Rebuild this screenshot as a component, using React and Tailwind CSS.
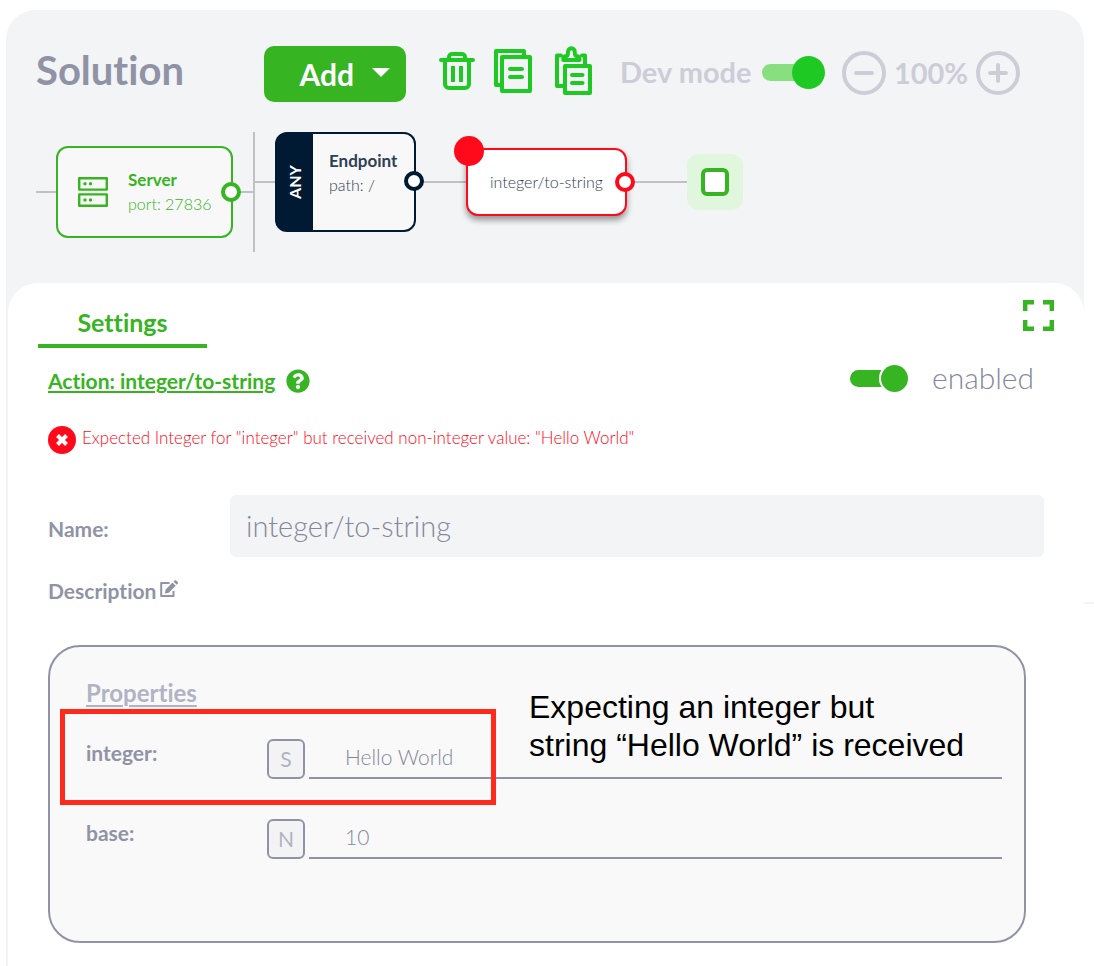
import React from "react";

function TrashIcon() {
  return (
    <svg width="36" height="38" viewBox="0 0 36 38" fill="none" stroke="currentColor" strokeWidth="4" strokeLinecap="round" strokeLinejoin="round" aria-hidden="true">
      <path d="M2 8h32" />
      <path d="M10 8V5a3 3 0 0 1 3-3h10a3 3 0 0 1 3 3v3" />
      <path d="M6 8v24a4 4 0 0 0 4 4h16a4 4 0 0 0 4-4V8" />
      <path d="M14 14v16M22 14v16" strokeLinecap="butt" />
    </svg>
  );
}

function CopyIcon() {
  return (
    <svg width="38" height="44" viewBox="0 0 38 44" fill="none" stroke="currentColor" strokeWidth="4" strokeLinecap="round" strokeLinejoin="round" aria-hidden="true">
      <path d="M6 36H2V2h28v5" />
      <rect x="8" y="8" width="28" height="34" />
      <path d="M16 20h12M16 28h12" />
    </svg>
  );
}

function PasteIcon() {
  return (
    <svg width="38" height="50" viewBox="0 0 38 50" fill="none" stroke="currentColor" strokeWidth="4" strokeLinecap="round" strokeLinejoin="round" aria-hidden="true">
      <path d="M8 40H2V9.500h4M27 9.500h3V18" />
      <path d="M8.300 14v-1a3 3 0 0 1 3-3c1.500 0 1.700-1 1.700-4a3.400 3.800 0 0 1 6.800 0c0 3 .2 4 1.700 4a3 3 0 0 1 3 3v1z" />
      <rect x="10" y="20" width="25" height="27" />
      <path d="M17 29h10.500M17 37h10.500" />
    </svg>
  );
}

function ServerIcon() {
  return (
    <svg width="30" height="30" viewBox="0 0 30 30" fill="none" stroke="currentColor" strokeWidth="2.4" strokeLinejoin="round" aria-hidden="true">
      <rect x="1.2" y="1.2" width="27.6" height="11.4" />
      <rect x="1.2" y="17.4" width="27.6" height="11.4" />
      <g fill="currentColor" stroke="none">
        <circle cx="7" cy="6.8" r="1.7" />
        <circle cx="12.5" cy="6.8" r="1.7" />
        <circle cx="7" cy="23" r="1.7" />
        <circle cx="12.5" cy="23" r="1.7" />
      </g>
    </svg>
  );
}

function ExpandIcon() {
  return (
    <svg width="31" height="31" viewBox="0 0 31 31" fill="none" stroke="currentColor" strokeWidth="4.4" aria-hidden="true">
      <path d="M2.2 11V2.2H11M20 2.2h8.8V11M28.8 20v8.8H20M11 28.8H2.2V20" />
    </svg>
  );
}

function HelpIcon() {
  return (
    <svg width="24" height="24" viewBox="0 0 512 512" fill="currentColor" aria-hidden="true">
      <path d="M504 256c0 137-111 248-248 248S8 393 8 256 119 8 256 8s248 111 248 248zM262.700 90c-54.500 0-89.300 23-116.500 63.800-3.500 5.300-2.400 12.400 2.700 16.300l34.700 26.300c5.200 3.900 12.600 3 16.700-2.100 17.900-22.700 30.100-35.800 57.300-35.800 20.400 0 45.700 13.100 45.700 33 0 15-12.400 22.700-32.500 34C247.100 238.500 216 254.900 216 296v4c0 6.600 5.400 12 12 12h56c6.600 0 12-5.400 12-12v-1.300c0-28.500 83.200-29.600 83.200-106.700 0-58-60.200-102-116.500-102zM256 338c-25.400 0-46 20.600-46 46s20.600 46 46 46 46-20.600 46-46-20.600-46-46-46z" />
    </svg>
  );
}

function ErrorIcon() {
  return (
    <svg className="shrink-0" width="28" height="28" viewBox="0 0 28 28" aria-hidden="true">
      <circle cx="14" cy="14" r="14" fill="currentColor" />
      <path d="M9.500 9.500l9 9M18.500 9.500l-9 9" stroke="white" strokeWidth="4" />
    </svg>
  );
}

function EditIcon() {
  return (
    <svg width="18" height="18" viewBox="0 0 18 18" aria-hidden="true">
      <path d="M9.500 3H1.200v13h12.300v-5" fill="none" stroke="currentColor" strokeWidth="2" strokeLinejoin="round" />
      <path d="M12.500 2.600l3.200 3.200-6.900 6.900-4 .8.800-4zM13.500 1.600l1-1a1.200 1.200 0 0 1 1.700 0l1.400 1.400a1.200 1.200 0 0 1 0 1.700l-1 1z" fill="currentColor" />
    </svg>
  );
}

function ZoomIcon({ plus }) {
  return (
    <svg width="44" height="44" viewBox="0 0 44 44" fill="none" stroke="currentColor" strokeWidth="4" strokeLinecap="round" aria-hidden="true">
      <circle cx="22" cy="22" r="20" />
      <path d={plus ? "M14 22h16M22 14v16" : "M14 22h16"} />
    </svg>
  );
}

function Port({ className }) {
  return <span className={"absolute size-5 rounded-full border-4 bg-white " + className} />;
}

function Toolbar() {
  return (
    <div className="flex items-center pl-[30px]">
      <h1 className="w-[228px] pb-2 text-[40px] leading-[48px] font-bold text-[#9093a5]">Solution</h1>
      <button type="button" className="flex h-14 w-[142px] items-center justify-end gap-[18px] rounded-[10px] bg-[#36b422] pr-4 text-[30px] leading-9 font-bold text-white">
        Add
        <svg className="mb-1" width="18" height="9" viewBox="0 0 18 9" fill="currentColor" aria-hidden="true">
          <path d="M0 0h18L9 9z" />
        </svg>
      </button>
      <div className="ml-[33px] flex items-center gap-[19px] pb-1.5 text-[#1fc924]">
        <button type="button" aria-label="Delete"><TrashIcon /></button>
        <button type="button" aria-label="Copy"><CopyIcon /></button>
        <button type="button" aria-label="Paste" className="ml-1"><PasteIcon /></button>
      </div>
      <label className="ml-[27px] flex items-center pb-1 text-[29px] leading-9 font-bold text-[#cdcdd8]">
        <span className="w-[142px] whitespace-nowrap">Dev mode</span>
        <input
          type="checkbox"
          role="switch"
          defaultChecked
          className="relative h-[33px] w-[63px] appearance-none before:absolute before:top-2 before:left-0 before:h-[17px] before:w-[50px] before:rounded-full before:bg-[#87df80] after:absolute after:top-0 after:right-0 after:size-[33px] after:rounded-full after:bg-[#1fc924]"
        />
      </label>
      <div className="ml-[17px] flex items-center pb-0.5 text-[#cdcdd8]">
        <button type="button" aria-label="Zoom out"><ZoomIcon /></button>
        <span className="w-[90px] text-center text-[29px] leading-9 font-bold">100%</span>
        <button type="button" aria-label="Zoom in"><ZoomIcon plus /></button>
      </div>
    </div>
  );
}

function Flow() {
  return (
    <div className="relative h-[181px] text-[17px] leading-6">
      <span className="absolute top-[89px] left-[30px] h-0.5 w-[218px] bg-[#c1c1c1]" />
      <span className="absolute top-[79px] left-[249px] h-0.5 w-[432px] bg-[#c1c1c1]" />
      <span className="absolute top-[30px] left-[247px] h-[120px] w-0.5 bg-[#c1c1c1]" />

      <div className="absolute top-11 left-[50px] flex h-[92px] w-[177px] items-center gap-5 rounded-xl border-2 border-[#36b422] bg-[#f8f8f8] pl-5 text-[#36b422]">
        <ServerIcon />
        <div>
          <div className="font-bold">Server</div>
          <div className="text-base leading-6 font-light">port: 27836</div>
        </div>
        <Port className="top-[34px] -right-2.5 border-[#36b422]" />
      </div>

      <div className="absolute top-[30px] left-[269px] flex h-[100px] w-[141px] rounded-xl border-2 border-[#001a33] bg-[#001a33] text-[#2f4055]">
        <div className="flex w-9 items-center justify-center">
          <span className="-rotate-90 text-base font-bold text-white">ANY</span>
        </div>
        <div className="flex-1 rounded-r-[10px] bg-[#f8f8f8] pt-[15px] pl-4">
          <div className="font-bold">Endpoint</div>
          <div className="text-base leading-6 font-light">path: /</div>
        </div>
        <Port className="top-[37px] -right-2.5 border-[#001a33]" />
      </div>

      <div className="absolute top-[46px] left-[460px] flex h-[68px] w-[161px] items-center justify-center rounded-xl border-2 border-[#ff0a1a] bg-white text-base font-light text-[#2f4055] shadow-[0_4px_6px_rgba(0,0,0,0.4)]">
        integer/to-string
        <span className="absolute -top-3.5 -left-3.5 size-[30px] rounded-full bg-[#ff0a1a]" />
        <Port className="top-[22px] -right-2.5 border-[#ff0a1a]" />
      </div>

      <div className="absolute top-[52px] left-[681px] flex size-14 items-center justify-center rounded-xl bg-[#e0f6dd]">
        <span className="size-7 rounded-md border-4 border-[#36b422] bg-white" />
      </div>
    </div>
  );
}

function PropertyRow({ id, label, kind, value }) {
  return (
    <div className="flex h-10">
      <label htmlFor={id} className="w-[181px] text-[21px] leading-7 font-bold text-[#9093a5]">{label}</label>
      <button type="button" aria-label={label + " type"} className="w-[38px] rounded-md border-2 border-[#9093a5] bg-[#f3f3f6] text-[21px] leading-9 text-[#b0b3c3]">{kind}</button>
      <input id={id} defaultValue={value} className="ml-1 min-w-0 flex-1 border-b-2 border-[#9093a5] bg-transparent pb-0.5 pl-9 text-[21px] font-light text-[#85889b] outline-none" />
    </div>
  );
}

function Settings() {
  return (
    <main className="ml-0.5 flex-1 rounded-t-[30px] bg-white pb-6">
      <div className="flex items-start justify-between pt-[17px] pr-[30px] pl-[30px]">
        <button type="button" className="h-12 w-[169px] border-b-4 border-[#36b422] text-[25px] leading-8 font-bold text-[#36b422]">Settings</button>
        <button type="button" aria-label="Expand" className="text-[#36b422]"><ExpandIcon /></button>
      </div>

      <div className="pl-10">
        <div className="mt-3 flex h-9 items-center justify-between pr-[50px]">
          <div className="flex items-center gap-[11px] pt-1.5 text-[#36b422]">
            <a href="#action" className="text-[21px] leading-7 font-bold underline decoration-2 underline-offset-2">Action: integer/to-string</a>
            <a href="#help" aria-label="Help"><HelpIcon /></a>
          </div>
          <label className="flex items-center gap-6 text-[30px] leading-9 font-light text-[#85889b]">
            <input
              type="checkbox"
              role="switch"
              defaultChecked
              className="relative h-[27px] w-[58px] appearance-none before:absolute before:top-[5px] before:left-0 before:h-[17px] before:w-[44px] before:rounded-full before:bg-[#36b422] after:absolute after:top-0 after:right-0 after:size-[27px] after:rounded-full after:bg-[#36b422] after:ring-2 after:ring-white"
            />
            <span className="pb-0.5">enabled</span>
          </label>
        </div>

        <p role="alert" className="mt-[30px] flex h-7 items-center gap-1.5 text-[17px] leading-6 font-light text-[#ff0a1a]">
          <ErrorIcon />
          <span className="pb-1">Expected Integer for "integer" but received non-integer value: "Hello World"</span>
        </p>

        <div className="mt-[41px] flex items-center pr-10">
          <label htmlFor="name" className="w-[182px] pt-1.5 text-[21px] leading-7 font-bold text-[#9093a5]">Name:</label>
          <input id="name" defaultValue="integer/to-string" className="h-[62px] min-w-0 flex-1 rounded-md bg-[#f3f4f6] px-4 pb-0.5 text-[29px] font-light text-[#85889b] outline-none" />
        </div>

        <div className="mt-5 flex items-center gap-1 text-[#9093a5]">
          <span className="text-[21px] leading-7 font-bold">Description</span>
          <button type="button" aria-label="Edit description" className="pb-1"><EditIcon /></button>
        </div>

        <section className="relative mt-10 mr-[58px] h-[298px] rounded-[32px] border-2 border-[#9093a5] bg-[#f9f9f9] pt-[30px] pr-[22px] pl-9">
          <h2 className="text-2xl leading-8 font-bold text-[#b0b3c3] underline decoration-2 underline-offset-3">Properties</h2>
          <div className="mt-[30px] flex flex-col gap-10">
            <PropertyRow id="integer" label="integer:" kind="S" value="Hello World" />
            <PropertyRow id="base" label="base:" kind="N" value="10" />
          </div>
          <div className="pointer-events-none absolute top-[62px] left-2.5 h-24 w-[436px] border-5 border-[#ff2a1c]" />
          <p className="pointer-events-none absolute top-[41px] left-[479px] font-['Liberation_Sans',Arial,sans-serif] text-[32px] leading-[38px] whitespace-nowrap text-black">
            Expecting an integer but<br />string “Hello World” is received
          </p>
        </section>
      </div>
    </main>
  );
}

export default function App() {
  return (
    <div className="flex min-h-screen bg-white pl-1.5 font-['Lato',sans-serif] [font-variant-ligatures:none]">
      <div className="mt-2.5 flex min-w-0 flex-1 flex-col rounded-t-[30px] bg-[#f3f4f6]">
        <header className="pt-9">
          <Toolbar />
          <Flow />
        </header>
        <Settings />
      </div>
      <div className="w-2.5 pt-[602px]">
        <div className="h-0.5 bg-[#f3f3f5]" />
      </div>
    </div>
  );
}
